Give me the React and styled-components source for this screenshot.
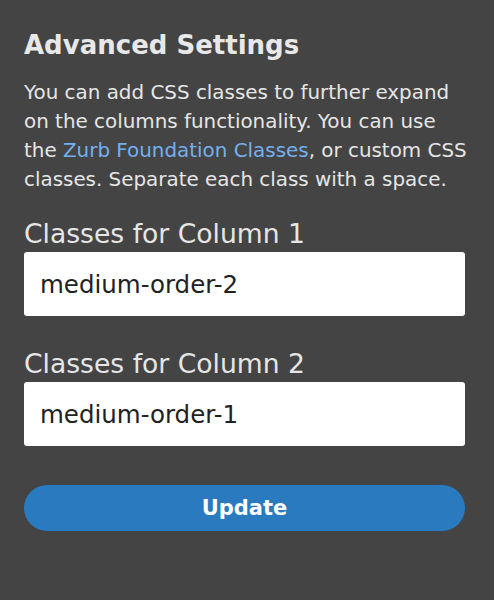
import React from "react";
import styled, { createGlobalStyle } from "styled-components";

const Global = createGlobalStyle`
  html, body { margin: 0; padding: 0; background: #444444; }
  body { font-family: "DejaVu Sans", "Liberation Sans", sans-serif; }
`;

const Panel = styled.div`
  box-sizing: border-box;
  width: 494px;
  min-height: 600px;
  padding: 29px 29px 0 24px;
  background: #444444;
  color: #e8e8e8;
  display: flex;
  flex-direction: column;
`;

const Title = styled.h2`
  margin: 0;
  font-size: 26px;
  font-weight: bold;
  line-height: 32px;
  color: #e8e8e8;
`;

const Text = styled.p`
  margin: 17px 0 0;
  font-size: 19.9px;
  line-height: 29px;
  white-space: nowrap;
  color: #e6e6e6;
`;

const Link = styled.a`
  color: #74b0ef;
  text-decoration: none;
`;

const Field = styled.div`
  display: flex;
  flex-direction: column;
  margin-top: ${(p) => p.$top}px;
`;

const Label = styled.label`
  font-size: 26.6px;
  line-height: 30px;
  color: #e6e6e6;
  margin-bottom: 3px;
`;

const Input = styled.input`
  box-sizing: border-box;
  width: 100%;
  height: 64px;
  border: none;
  border-radius: 3px;
  background: #ffffff;
  padding: 0 16px;
  font-family: inherit;
  font-size: 24.5px;
  color: #222222;
  outline: none;
`;

const Button = styled.button`
  margin-top: 39px;
  height: 46px;
  width: 100%;
  border: none;
  border-radius: 23px;
  background: #2a7abf;
  color: #ffffff;
  font-family: inherit;
  font-size: 21px;
  font-weight: bold;
  cursor: pointer;
`;

export default function App() {
  return (
    <>
      <Global />
      <Panel>
        <Title>Advanced Settings</Title>
        <Text>
          You can add CSS classes to further expand
          <br />
          on the columns functionality. You can use
          <br />
          the <Link href="#">Zurb Foundation Classes</Link>, or custom CSS
          <br />
          classes. Separate each class with a space.
        </Text>
        <Field $top={25}>
          <Label>Classes for Column 1</Label>
          <Input defaultValue="medium-order-2" />
        </Field>
        <Field $top={33}>
          <Label>Classes for Column 2</Label>
          <Input defaultValue="medium-order-1" />
        </Field>
        <Button>Update</Button>
      </Panel>
    </>
  );
}
